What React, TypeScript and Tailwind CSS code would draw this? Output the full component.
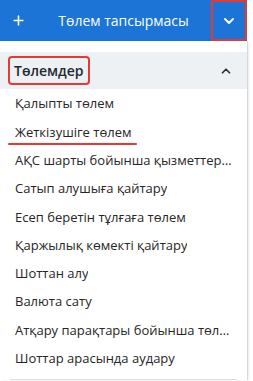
import { Plus, ChevronDown, ChevronUp } from "lucide-react";

const items = [
  "Қалыпты төлем",
  "Жеткізушіге төлем",
  "АҚС шарты бойынша қызметтер үшін төлем",
  "Сатып алушыға қайтару",
  "Есеп беретін тұлғаға төлем",
  "Қаржылық көмекті қайтару",
  "Шоттан алу",
  "Валюта сату",
  "Атқару парақтары бойынша төлем",
  "Шоттар арасында аудару",
];

export default function App() {
  return (
    <div
      className="h-[381px] w-[253px] overflow-hidden bg-white"
      style={{ fontFamily: '"Open Sans", "Noto Sans", sans-serif' }}
    >
      <div className="flex h-[41px] w-[247px] bg-[#1b74d6] text-white">
        <button type="button" className="flex flex-1 items-center pl-[11px]">
          <Plus size={15} strokeWidth={2.5} />
          <span className="flex-1 pl-[10px] text-center text-[14px]">Төлем тапсырмасы</span>
        </button>
        <button
          type="button"
          className="flex w-[36px] items-center justify-center rounded-[3px] border-2 border-[#e53935]"
        >
          <ChevronDown size={16} strokeWidth={3} />
        </button>
      </div>

      <div className="w-[248px] border-r border-[#d6d8db] pt-[11px] shadow-[1px_0_2px_rgba(0,0,0,0.08)]">
        <div className="flex h-[37px] items-center justify-between bg-[#eef1f4] pl-[8px] pr-[14px]">
          <span className="flex h-[29px] items-center rounded-[4px] border-2 border-[#e53935] pl-[4px] pr-[4px] text-[14px] font-semibold text-[#1f2933]">
            Төлемдер
          </span>
          <ChevronUp size={14} strokeWidth={3} className="text-[#2b2f33]" />
        </div>

        <ul className="pt-[1px]">
          {items.map((item, i) => (
            <li
              key={item}
              className="relative flex h-[28.3px] items-center px-[15px] text-[13px] text-[#262626]"
            >
              <span className="truncate">{item}</span>
              {i === 1 ? (
                <span className="absolute bottom-[2px] left-[8px] h-[2px] w-[129px] rounded-full bg-[#e53935]" />
              ) : null}
            </li>
          ))}
        </ul>
        <div className="mx-[10px] mt-[6px] h-[1px] bg-[#d9dcdf]" />
      </div>
    </div>
  );
}
